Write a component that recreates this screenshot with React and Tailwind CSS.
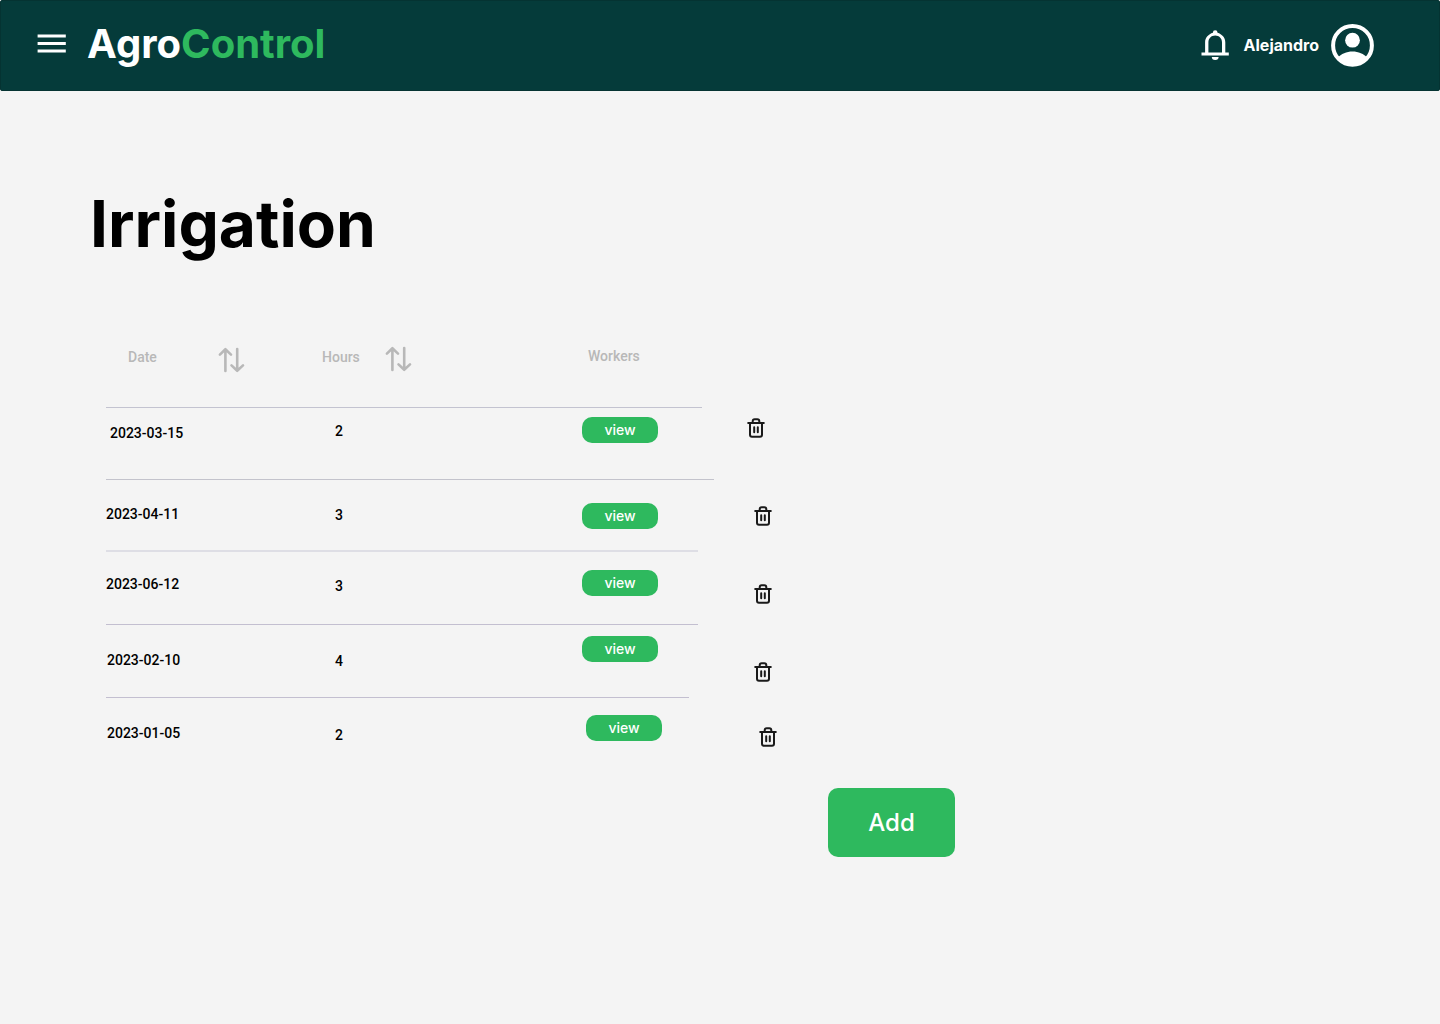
const rows = [
  {
    date: '2023-03-15', hours: '2',
    row: 'h-[72px]', line: 'border-t border-[#c3c3d0]', rule: 'w-[120px]',
    datePad: 'pt-[15px] pl-1', hoursPad: 'pt-[13px]', viewPad: 'pt-[9px]', trashPad: 'pt-[9px] pl-[18px]',
  },
  {
    date: '2023-04-11', hours: '3',
    row: 'h-[71px]', line: 'border-t border-[#c3c3cc]', rule: 'w-[132px]',
    datePad: 'pt-6', hoursPad: 'pt-[25px]', viewPad: 'pt-[23px]', trashPad: 'pt-[25px] pl-[25px]',
  },
  {
    date: '2023-06-12', hours: '3',
    row: 'h-[74px]', line: 'border-t-2 border-[#dedee5]', rule: 'w-[116px]',
    datePad: 'pt-[22px]', hoursPad: 'pt-6', viewPad: 'pt-[18px]', trashPad: 'pt-8 pl-[25px]',
  },
  {
    date: '2023-02-10', hours: '4',
    row: 'h-[73px]', line: 'border-t border-[#c3bfd0]', rule: 'w-[116px]',
    datePad: 'pt-[25px] pl-px', hoursPad: 'pt-[26px]', viewPad: 'pt-[11px]', trashPad: 'pt-9 pl-[25px]',
  },
  {
    date: '2023-01-05', hours: '2',
    row: 'h-[73px]', line: 'border-t border-[#c3bfd0]', rule: 'w-[107px]',
    datePad: 'pt-[25px] pl-px', hoursPad: 'pt-[27px]', viewPad: 'pt-[17px] pl-1', trashPad: 'pt-7 pl-[30px]',
  },
];

function SortIcon() {
  return (
    <svg className="size-7" viewBox="0 0 28 28" fill="none" stroke="currentColor" strokeWidth="2.6" strokeLinecap="round" strokeLinejoin="round" aria-hidden="true">
      <path d="M8.400 25V3.400M2.900 8.600 8.400 3.200l5.600 5.400" />
      <path d="M20.200 3v21.600M14.500 19.400l5.700 5.400 5.800-5.400" />
    </svg>
  );
}

function TrashIcon() {
  return (
    <svg className="size-6" viewBox="0 0 24 24" fill="none" stroke="currentColor" strokeWidth="2" strokeLinecap="round" strokeLinejoin="round" aria-hidden="true">
      <path d="M4.200 7h15.600" />
      <path d="M8.700 6.500V5.300a2 2 0 0 1 2-2h2.600a2 2 0 0 1 2 2v1.200" />
      <path d="M6 7.500v11.200a2 2 0 0 0 2 2h8a2 2 0 0 0 2-2V7.500" />
      <path d="M10.200 11.200v5M13.800 11.200v5" />
    </svg>
  );
}

function Header() {
  return (
    <header className="flex h-[91px] items-center justify-between rounded-xs border border-[#053332] bg-[#053b3a] pr-16 pb-0.5 pl-9 text-white">
      <div className="flex items-center gap-5">
        <button type="button" aria-label="Menu" className="flex">
          <svg className="h-8 w-[30px]" viewBox="0 0 30 32" fill="currentColor" aria-hidden="true">
            <path d="M.6 5.600h28.200v3H.6zM.6 13h28.200v3H.6zM.6 20.400h28.200v3H.6z" />
          </svg>
        </button>
        <a href="#" className="pb-0.5 text-[40px] leading-[48px] font-bold">
          Agro<span className="text-[#2eb95e]">Control</span>
        </a>
      </div>
      <div className="flex items-center">
        <button type="button" aria-label="Notifications" className="flex">
          <svg className="size-9" viewBox="0 0 36 36" fill="currentColor" aria-hidden="true">
            <path d="M3.500 28.600v-3.200h3.600V15.400c0-4.800 3.400-8.200 7.800-9.600V5.600a2.300 2.300 0 0 1 4.600 0v.2c4.500 1.400 7.800 4.800 7.800 9.600v10h3.500v3.200zM10.400 25.400h13.600V15.400c0-4.100-2.900-6.900-6.800-6.900s-6.800 2.800-6.800 6.900z" />
            <path d="M13.800 29.900h6.800a3.400 3 0 0 1-6.800 0z" />
          </svg>
        </button>
        <span className="ml-2.5 text-base font-bold">Alejandro</span>
        <button type="button" aria-label="Account" className="ml-3 flex">
          <svg className="size-11" viewBox="0 0 44 44" aria-hidden="true">
            <circle cx="21.500" cy="22.400" r="19.400" fill="none" stroke="currentColor" strokeWidth="4" />
            <circle cx="21.500" cy="17.200" r="7.400" fill="currentColor" />
            <path d="M6.500 34.900c3.600-4 9.200-6.300 15-6.300s11.400 2.300 15 6.300c-3.500 5-9 7.500-15 7.500s-11.500-2.500-15-7.500z" fill="currentColor" />
          </svg>
        </button>
      </div>
    </header>
  );
}

export default function App() {
  return (
    <div className="min-h-screen bg-[#f4f4f4] font-['Inter',sans-serif] text-black">
      <Header />
      <main className="px-[90px] pt-[94px]">
        <h1 className="text-[64px] leading-[77px] font-bold">Irrigation</h1>
        <table className="mt-20 ml-4 block font-['Roboto',sans-serif] text-sm font-medium">
          <thead className="block">
            <tr className="grid h-[65px] grid-cols-[216px_260px_144px_auto] text-left text-[#b8b8b8]">
              <th scope="col" className="flex items-start pl-[22px] font-medium">
                <span className="w-[89px] pt-[5px]">Date</span>
                <button type="button" aria-label="Sort by date" className="flex pt-1"><SortIcon /></button>
              </th>
              <th scope="col" className="flex items-start font-medium">
                <span className="w-[62px] pt-[5px]">Hours</span>
                <button type="button" aria-label="Sort by hours" className="flex pt-[3px]"><SortIcon /></button>
              </th>
              <th scope="col" className="pt-1 pl-1.5 font-medium">Workers</th>
            </tr>
          </thead>
          <tbody className="block">
            {rows.map((r) => (
              <tr key={r.date} className={`grid grid-cols-[229px_247px_144px_auto] ${r.row}`}>
                <td className={`${r.line} ${r.datePad}`}>{r.date}</td>
                <td className={`${r.line} ${r.hoursPad}`}>{r.hours}</td>
                <td className={`${r.line} ${r.rule} ${r.viewPad}`}>
                  <button type="button" className="block h-[26px] w-[76px] rounded-[10px] bg-[#2eb95e] font-['Inter',sans-serif] text-sm leading-[26px] font-medium text-white">
                    view
                  </button>
                </td>
                <td className={`text-[#1a1a1a] ${r.trashPad}`}>
                  <button type="button" aria-label={`Delete ${r.date}`} className="block"><TrashIcon /></button>
                </td>
              </tr>
            ))}
          </tbody>
        </table>
        <button type="button" className="mt-[18px] ml-[738px] h-[69px] w-[127px] rounded-[10px] bg-[#2eb95e] text-2xl font-medium text-white">
          Add
        </button>
      </main>
    </div>
  );
}
